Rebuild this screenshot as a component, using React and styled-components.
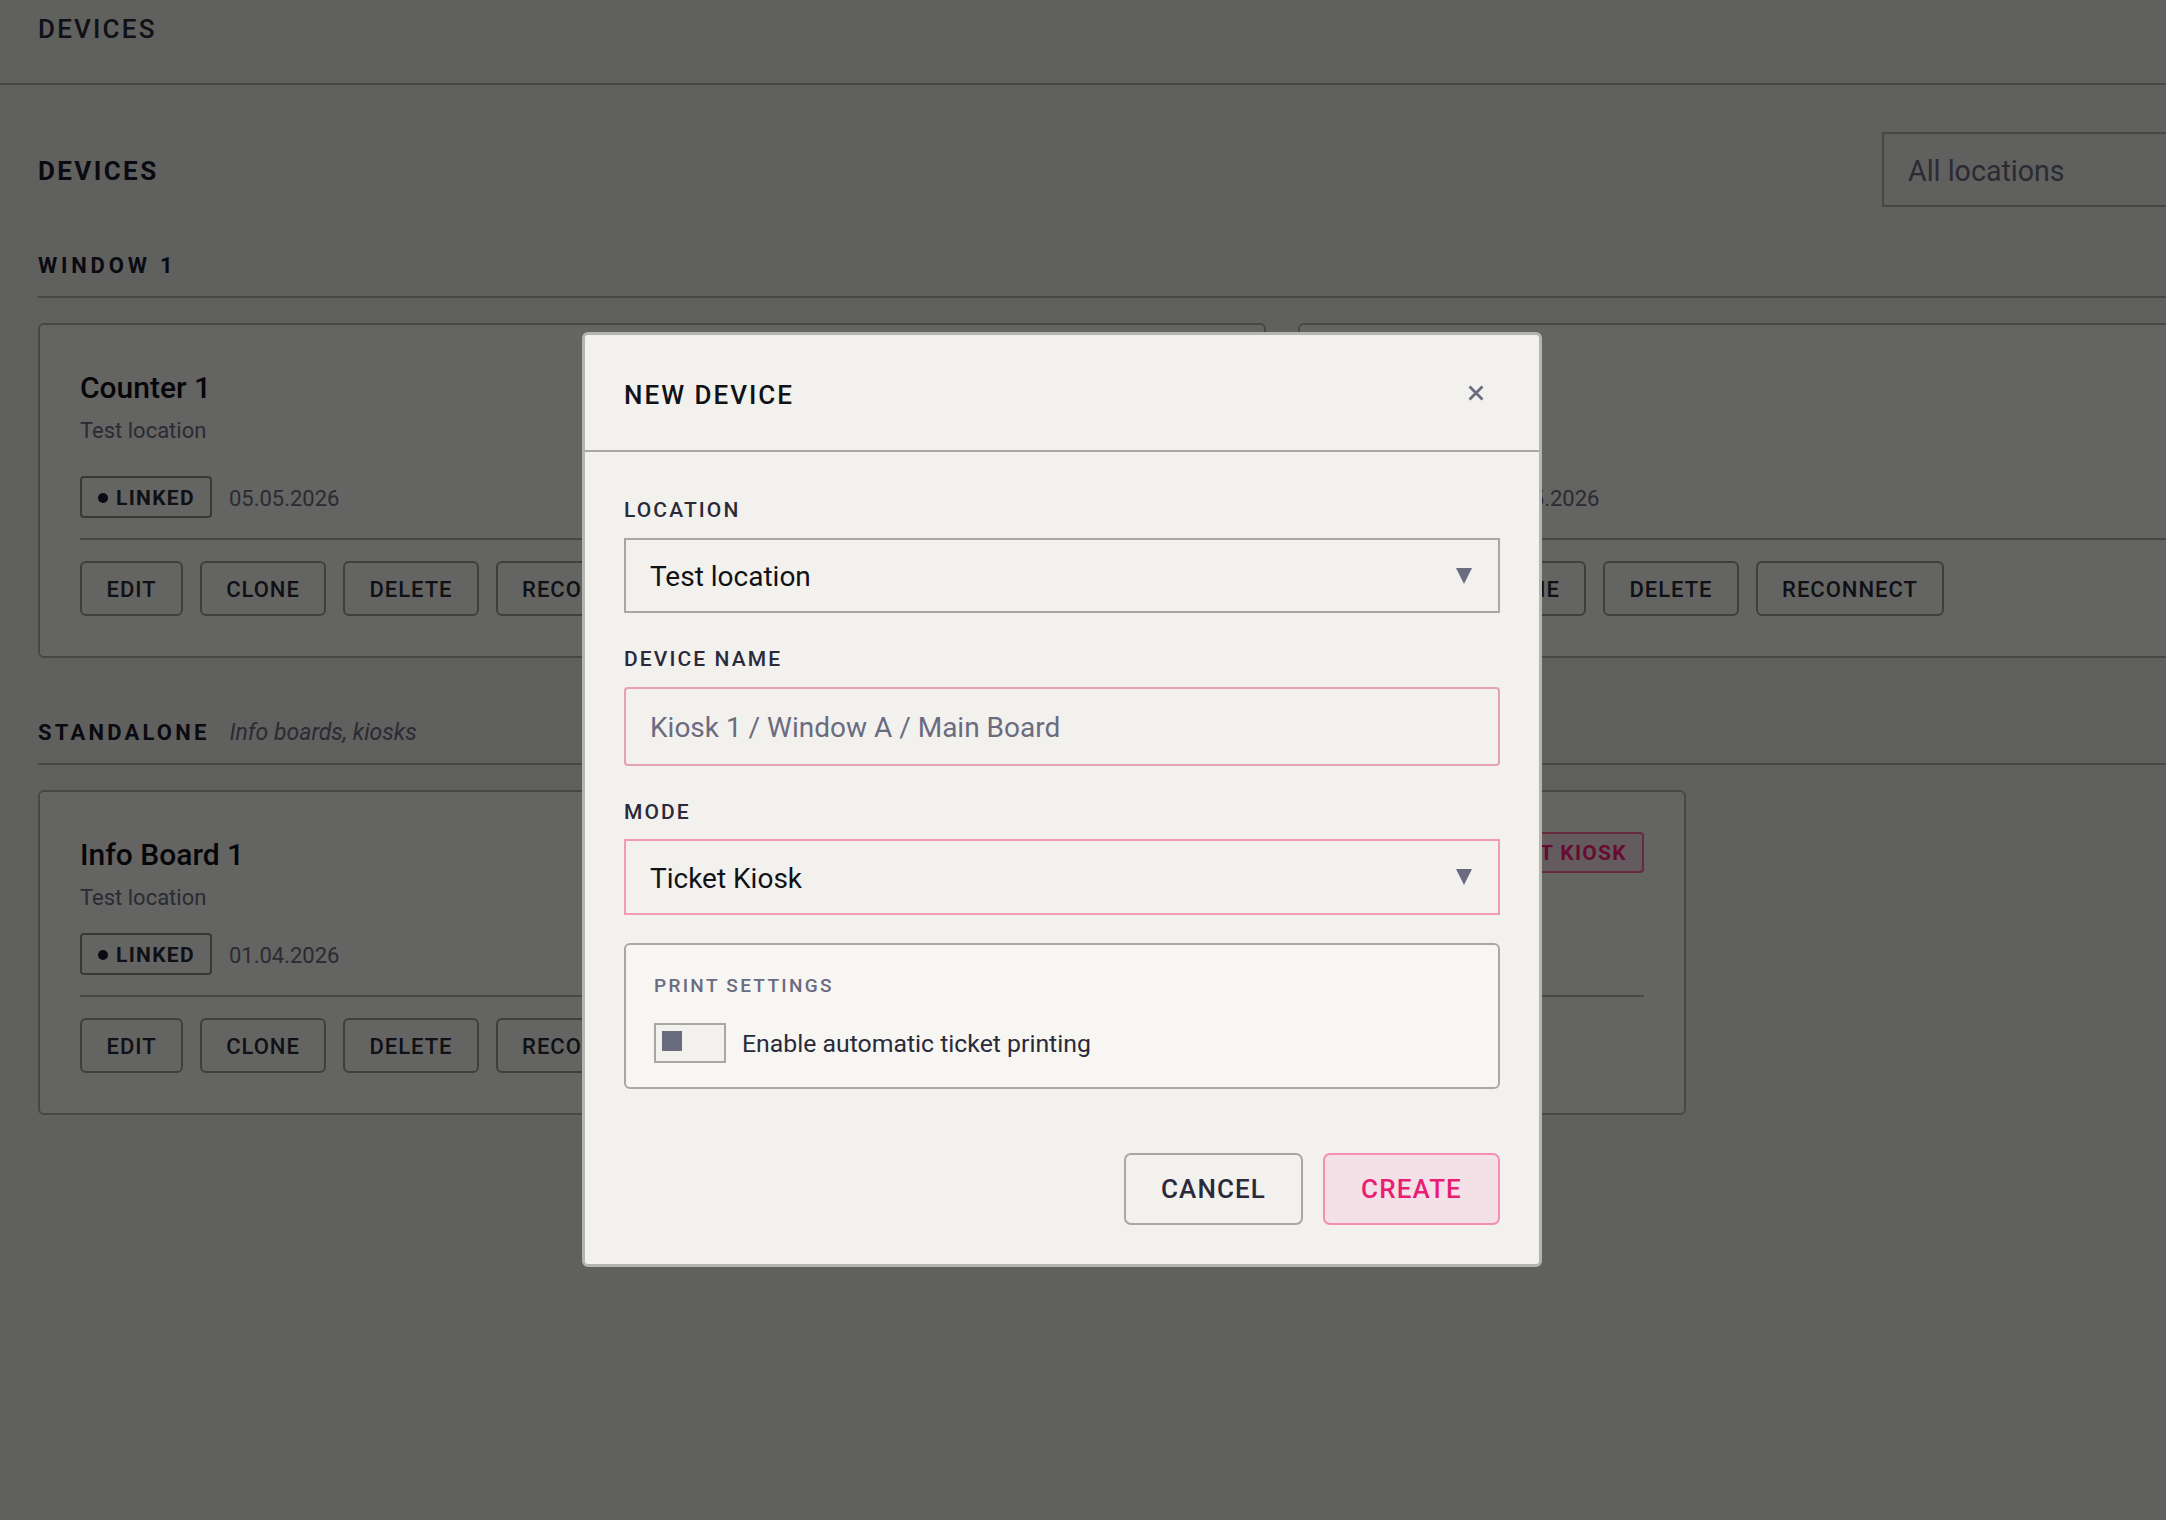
import React from "react";
import styled, { createGlobalStyle } from "styled-components";

const FONT = `"Roboto", "Noto Sans", sans-serif`;

const Global = createGlobalStyle`
  html, body { margin: 0; padding: 0; background: #f0efeb; overflow: hidden; }
  * { box-sizing: border-box; }
  body { font-family: ${FONT}; }
`;

const Page = styled.div`
  position: relative;
  width: 2166px;
  height: 1520px;
  overflow: hidden;
  background: #f0efeb;
`;
const TopBar = styled.header`
  height: 85px;
  width: 2600px;
  padding: 10px 38px 0;
  border-bottom: 2px solid #b4b2ad;
`;
const TopTitle = styled.div`
  font-size: 26px;
  line-height: 38px;
  font-weight: 500;
  letter-spacing: 2.2px;
  color: #2a2a3a;
`;
const Main = styled.main`
  width: 2524px;
  padding: 47px 0 0 38px;
`;
const TitleRow = styled.div`
  display: flex;
  align-items: center;
  justify-content: space-between;
`;
const PageTitle = styled.h1`
  margin: 2px 0 0;
  font-size: 26px;
  font-weight: 700;
  letter-spacing: 2.4px;
  color: #1a1a2e;
`;
const FilterSelect = styled.div`
  width: 642px;
  height: 75px;
  padding: 2px 24px 0;
  display: flex;
  align-items: center;
  border: 2px solid #b4b2ad;
  font-size: 28.6px;
  color: #6b6b80;
`;
const Section = styled.section`
  margin-top: ${(p) => p.$top}px;
`;
const SectionHead = styled.div`
  display: flex;
  align-items: center;
  gap: 20px;
  height: 53px;
  padding: 2px 0 13px;
  border-bottom: 2px solid #b4b2ad;
`;
const SectionTitle = styled.h2`
  margin: 0;
  font-size: 22px;
  font-weight: 700;
  letter-spacing: ${(p) => p.$track}px;
  color: #1a1a2e;
`;
const SectionHint = styled.span`
  font-size: 23px;
  font-style: italic;
  color: #6b6b80;
`;
const CardRow = styled.div`
  margin-top: 25px;
  display: grid;
  grid-template-columns: ${(p) => p.$cols};
  gap: 32px;
`;
const Card = styled.article`
  border: 2px solid #b4b2ad;
  border-radius: 6px;
  background: #fafaf8;
  padding: 40px;
`;
const CardHeader = styled.div`
  display: flex;
  justify-content: space-between;
  align-items: flex-start;
`;
const CardTitle = styled.h3`
  margin: 0;
  font-size: 30px;
  line-height: 46px;
  font-weight: 500;
  color: #111118;
`;
const CardLocation = styled.div`
  font-size: 22px;
  line-height: 40px;
  color: #6b6b80;
`;
const MetaRow = styled.div`
  display: flex;
  align-items: center;
  gap: 17px;
  margin-top: ${(p) => p.$top}px;
`;
const Badge = styled.span`
  display: inline-flex;
  align-items: center;
  gap: 8px;
  height: ${(p) => (p.$pink ? 41 : 42)}px;
  padding: 1px 15px 0 16px;
  border: 2px solid ${(p) => (p.$pink ? "#ff6a9a" : "#8d8c88")};
  border-radius: 4px;
  font-size: 21px;
  font-weight: 700;
  letter-spacing: 1.3px;
  color: ${(p) => (p.$pink ? "#ff2079" : "#2a2a3a")};
  background: ${(p) => (p.$pink ? "#fbe3ec" : "transparent")};
`;
const Dot = styled.i`
  width: 10px;
  height: 10px;
  border-radius: 50%;
  background: #1a1a2e;
`;
const DateText = styled.span`
  padding-top: 2px;
  font-size: 22px;
  color: #6b6b80;
`;
const Divider = styled.hr`
  margin: 20px 0 21px;
  border: 0;
  height: 2px;
  background: #b4b2ad;
`;
const ButtonRow = styled.div`
  display: flex;
  gap: 16.5px;
  height: 55px;
`;
const ActionButton = styled.button`
  height: 55px;
  padding: 2px 24.5px 0;
  border: 2px solid #9e9d99;
  border-radius: 6px;
  background: transparent;
  font-family: ${FONT};
  font-size: 22px;
  font-weight: 500;
  letter-spacing: 1px;
  color: #2a2a3a;
`;
const Overlay = styled.div`
  position: fixed;
  inset: 0;
  background: rgba(0, 0, 0, 0.6);
  display: flex;
  align-items: flex-start;
  padding: 332px 0 0 582px;
`;
const Modal = styled.div`
  width: 960px;
  border: 3px solid #b5b4af;
  border-radius: 6px;
  background: #f2f1ed;
`;
const ModalHeader = styled.div`
  height: 117px;
  padding: 4px 43px 0 39px;
  display: flex;
  align-items: center;
  justify-content: space-between;
  border-bottom: 2px solid #a8a7a2;
`;
const ModalTitle = styled.h2`
  margin: 0;
  font-size: 26px;
  font-weight: 500;
  letter-spacing: 2px;
  color: #111118;
`;
const CloseButton = styled.button`
  width: 40px;
  height: 40px;
  padding: 0 0 4px;
  border: 0;
  background: none;
  display: flex;
  align-items: center;
  justify-content: center;
  color: #6b6b80;
`;
const ModalBody = styled.div`
  padding: 43px 39px 39px;
`;
const Field = styled.div`
  margin-top: ${(p) => p.$top}px;
`;
const FieldLabel = styled.label`
  display: block;
  font-size: 21px;
  line-height: 30px;
  font-weight: 500;
  letter-spacing: 2.1px;
  color: #2a2a3a;
  margin-bottom: ${(p) => p.$gap}px;
`;
const SelectBox = styled.div`
  height: ${(p) => (p.$pink ? 76 : 75)}px;
  padding: 2px 26px 0 24px;
  display: flex;
  align-items: center;
  justify-content: space-between;
  border: 2px solid ${(p) => (p.$pink ? "#f29ab8" : "#a8a7a2")};
  font-size: 28px;
  color: #111118;
`;
const SelectArrow = styled.svg`
  margin-top: -2px;
`;
const TextBox = styled.input`
  display: block;
  width: 100%;
  height: 79px;
  padding: 2px 24px 0;
  border: 2px solid #e6a0b8;
  border-radius: 4px;
  outline: 0;
  background: #f2f1ed;
  font-family: ${FONT};
  font-size: 28px;
  color: #111118;
  &::placeholder { color: #6b6b80; opacity: 1; }
`;
const PrintBox = styled.div`
  margin-top: 28px;
  height: 146px;
  padding: 27px 28px 0;
  border: 2px solid #a8a7a2;
  border-radius: 6px;
  background: #f7f6f2;
`;
const PrintTitle = styled.div`
  font-size: 19px;
  line-height: 28px;
  font-weight: 500;
  letter-spacing: 2.3px;
  color: #6b6b80;
`;
const ToggleRow = styled.div`
  margin-top: 23px;
  display: flex;
  align-items: center;
  gap: 16px;
`;
const Toggle = styled.div`
  width: 72px;
  height: 40px;
  padding: 6px;
  border: 2px solid #a8a7a2;
  background: #f2f1ed;
`;
const Knob = styled.div`
  width: 20px;
  height: 20px;
  background: #6b6b80;
`;
const ToggleText = styled.span`
  font-size: 24.8px;
  color: #2a2a3a;
`;
const Actions = styled.div`
  margin-top: 64px;
  display: flex;
  justify-content: flex-end;
  gap: 20px;
`;
const DialogButton = styled.button`
  height: 72px;
  padding: 0;
  width: ${(p) => p.$w}px;
  border: 2px solid ${(p) => (p.$primary ? "#f48fb1" : "#a8a7a2")};
  border-radius: 7px;
  background: ${(p) => (p.$primary ? "#f4e0e7" : "#f2f1ed")};
  font-family: ${FONT};
  font-size: 26px;
  font-weight: 500;
  letter-spacing: 1.1px;
  color: ${(p) => (p.$primary ? "#e91e73" : "#2a2a3a")};
`;

const Arrow = () => (
  <SelectArrow width="16" height="16" viewBox="0 0 16 16" aria-hidden="true">
    <path d="M0 0H16L8 16Z" fill="#6b6b80" />
  </SelectArrow>
);
const Cross = () => (
  <svg width="18" height="18" viewBox="0 0 18 18" aria-hidden="true">
    <path d="M2.5 2.5L15.5 15.5M15.5 2.5L2.5 15.5" stroke="currentColor" strokeWidth="2.8" fill="none" />
  </svg>
);

const Buttons = () => (
  <ButtonRow>
    {["EDIT", "CLONE", "DELETE", "RECONNECT"].map((b) => (
      <ActionButton key={b}>{b}</ActionButton>
    ))}
  </ButtonRow>
);

const DeviceCard = ({ name, date, compact, mode }) => (
  <Card>
    <CardHeader>
      <CardTitle>{name}</CardTitle>
      {mode && <Badge $pink>{mode}</Badge>}
    </CardHeader>
    <CardLocation>Test location</CardLocation>
    <MetaRow $top={compact ? 15 : 25}>
      <Badge>
        <Dot />
        LINKED
      </Badge>
      <DateText>{date}</DateText>
    </MetaRow>
    <Divider />
    <Buttons />
  </Card>
);

export default function App() {
  return (
    <Page>
      <Global />
      <TopBar>
        <TopTitle>DEVICES</TopTitle>
      </TopBar>
      <Main>
        <TitleRow>
          <PageTitle>DEVICES</PageTitle>
          <FilterSelect>All locations</FilterSelect>
        </TitleRow>
        <Section $top={38}>
          <SectionHead>
            <SectionTitle $track={3.8}>WINDOW 1</SectionTitle>
          </SectionHead>
          <CardRow $cols="1228px 1228px">
            <DeviceCard name="Counter 1" date="05.05.2026" />
            <DeviceCard name="Counter 2" date="05.05.2026" />
          </CardRow>
        </Section>
        <Section $top={54}>
          <SectionHead>
            <SectionTitle $track={3.2}>STANDALONE</SectionTitle>
            <SectionHint>Info boards, kiosks</SectionHint>
          </SectionHead>
          <CardRow $cols="1648px">
            <DeviceCard name="Info Board 1" date="01.04.2026" compact mode="TICKET KIOSK" />
          </CardRow>
        </Section>
      </Main>
      <Overlay>
        <Modal>
          <ModalHeader>
            <ModalTitle>NEW DEVICE</ModalTitle>
            <CloseButton aria-label="Close">
              <Cross />
            </CloseButton>
          </ModalHeader>
          <ModalBody>
            <Field $top={0}>
              <FieldLabel $gap={13}>LOCATION</FieldLabel>
              <SelectBox>
                Test location
                <Arrow />
              </SelectBox>
            </Field>
            <Field $top={31}>
              <FieldLabel $gap={13}>DEVICE NAME</FieldLabel>
              <TextBox placeholder="Kiosk 1 / Window A / Main Board" />
            </Field>
            <Field $top={31}>
              <FieldLabel $gap={12}>MODE</FieldLabel>
              <SelectBox $pink>
                Ticket Kiosk
                <Arrow />
              </SelectBox>
            </Field>
            <PrintBox>
              <PrintTitle>PRINT SETTINGS</PrintTitle>
              <ToggleRow>
                <Toggle>
                  <Knob />
                </Toggle>
                <ToggleText>Enable automatic ticket printing</ToggleText>
              </ToggleRow>
            </PrintBox>
            <Actions>
              <DialogButton $w={179}>CANCEL</DialogButton>
              <DialogButton $primary $w={177}>CREATE</DialogButton>
            </Actions>
          </ModalBody>
        </Modal>
      </Overlay>
    </Page>
  );
}
